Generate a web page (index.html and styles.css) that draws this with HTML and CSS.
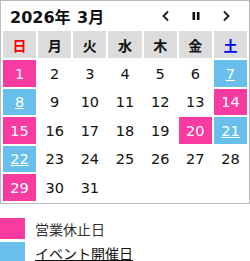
FILE: index.html
```html
<!DOCTYPE html>
<html lang="ja">
<head>
<meta charset="utf-8">
<link rel="stylesheet" href="styles.css">
</head>
<body>
<div class="cal">
  <div class="cal-head">
    <div class="cal-title">2026年 3月</div>
    <div class="cal-nav">
      <svg class="nav-icon" width="10" height="12" viewBox="0 0 10 12"><path d="M7 1.5 L2.5 6 L7 10.5" fill="none" stroke="#222" stroke-width="2"/></svg>
      <svg class="nav-icon" width="10" height="12" viewBox="0 0 10 12"><rect x="1.5" y="2" width="2.6" height="8" fill="#111"/><rect x="5.9" y="2" width="2.6" height="8" fill="#111"/></svg>
      <svg class="nav-icon" width="10" height="12" viewBox="0 0 10 12"><path d="M3 1.5 L7.5 6 L3 10.5" fill="none" stroke="#222" stroke-width="2"/></svg>
    </div>
  </div>
  <div class="grid">
    <div class="wd sun">日</div><div class="wd">月</div><div class="wd">火</div><div class="wd">水</div><div class="wd">木</div><div class="wd">金</div><div class="wd sat">土</div>
    <div class="d closed">1</div><div class="d">2</div><div class="d">3</div><div class="d">4</div><div class="d">5</div><div class="d">6</div><div class="d event"><a>7</a></div>
    <div class="d event"><a>8</a></div><div class="d">9</div><div class="d">10</div><div class="d">11</div><div class="d">12</div><div class="d">13</div><div class="d closed">14</div>
    <div class="d closed">15</div><div class="d">16</div><div class="d">17</div><div class="d">18</div><div class="d">19</div><div class="d closed">20</div><div class="d event"><a>21</a></div>
    <div class="d event"><a>22</a></div><div class="d">23</div><div class="d">24</div><div class="d">25</div><div class="d">26</div><div class="d">27</div><div class="d">28</div>
    <div class="d closed">29</div><div class="d">30</div><div class="d">31</div><div class="d"></div><div class="d"></div><div class="d"></div><div class="d"></div>
  </div>
</div>
<div class="legend">
  <div class="lg-row"><span class="sw sw-closed"></span><span class="lg-text">営業休止日</span></div>
  <div class="lg-row"><span class="sw sw-event"></span><a class="lg-text lg-link">イベント開催日</a></div>
</div>
</body>
</html>
```
FILE: styles.css
```css
* { box-sizing: border-box; }
html, body { margin: 0; padding: 0; background: #fff; }
body {
  font-family: "DejaVu Sans", "Noto Sans CJK JP", sans-serif;
  font-size: 14px;
  color: #111;
  width: 250px;
}
.cal {
  border: 1px solid #bbb;
  width: 250px;
}
.cal-head {
  height: 28px;
  display: flex;
  align-items: center;
  justify-content: space-between;
  padding: 0 18px 0 9px;
}
.cal-title {
  font-family: "DejaVu Sans", "Noto Sans CJK JP", sans-serif;
  font-weight: bold;
  font-size: 16px;
  word-spacing: 1px;
  margin-top: 1px;
}
.cal-nav {
  display: flex;
  gap: 20px;
  align-items: center;
  margin-top: 2px;
}
.nav-icon { display: block; }
.grid {
  display: grid;
  grid-template-columns: repeat(7, 1fr);
  grid-template-rows: 27px 27px 26px 27px 26px 27px;
  gap: 2px;
  padding: 2px;
}
.wd {
  background: #dcdcdc;
  display: flex;
  align-items: center;
  justify-content: center;
  font-family: "Noto Sans CJK JP", sans-serif;
  font-weight: bold;
  font-size: 14px;
  color: #111;
}
.wd.sun { color: #f00; }
.wd.sat { color: #00f; }
.d {
  display: flex;
  align-items: center;
  justify-content: center;
  font-size: 14.5px;
  color: #111;
}
.d.closed { background: #f73ba1; color: #fff; }
.d.event { background: #68bfec; }
.d.event a { color: #fff; text-decoration: underline; }
.legend {
  padding-top: 14px;
  display: flex;
  flex-direction: column;
  gap: 3px;
}
.lg-row {
  display: flex;
  align-items: center;
  height: 21px;
}
.sw {
  width: 25px;
  height: 21px;
  display: block;
}
.sw-closed { background: #f73ba1; }
.sw-event { background: #68bfec; }
.lg-text {
  margin-left: 10px;
  font-family: "Noto Sans CJK JP", sans-serif;
  font-size: 14px;
  color: #333;
}
.lg-link { color: #111; text-decoration: underline; }
```
